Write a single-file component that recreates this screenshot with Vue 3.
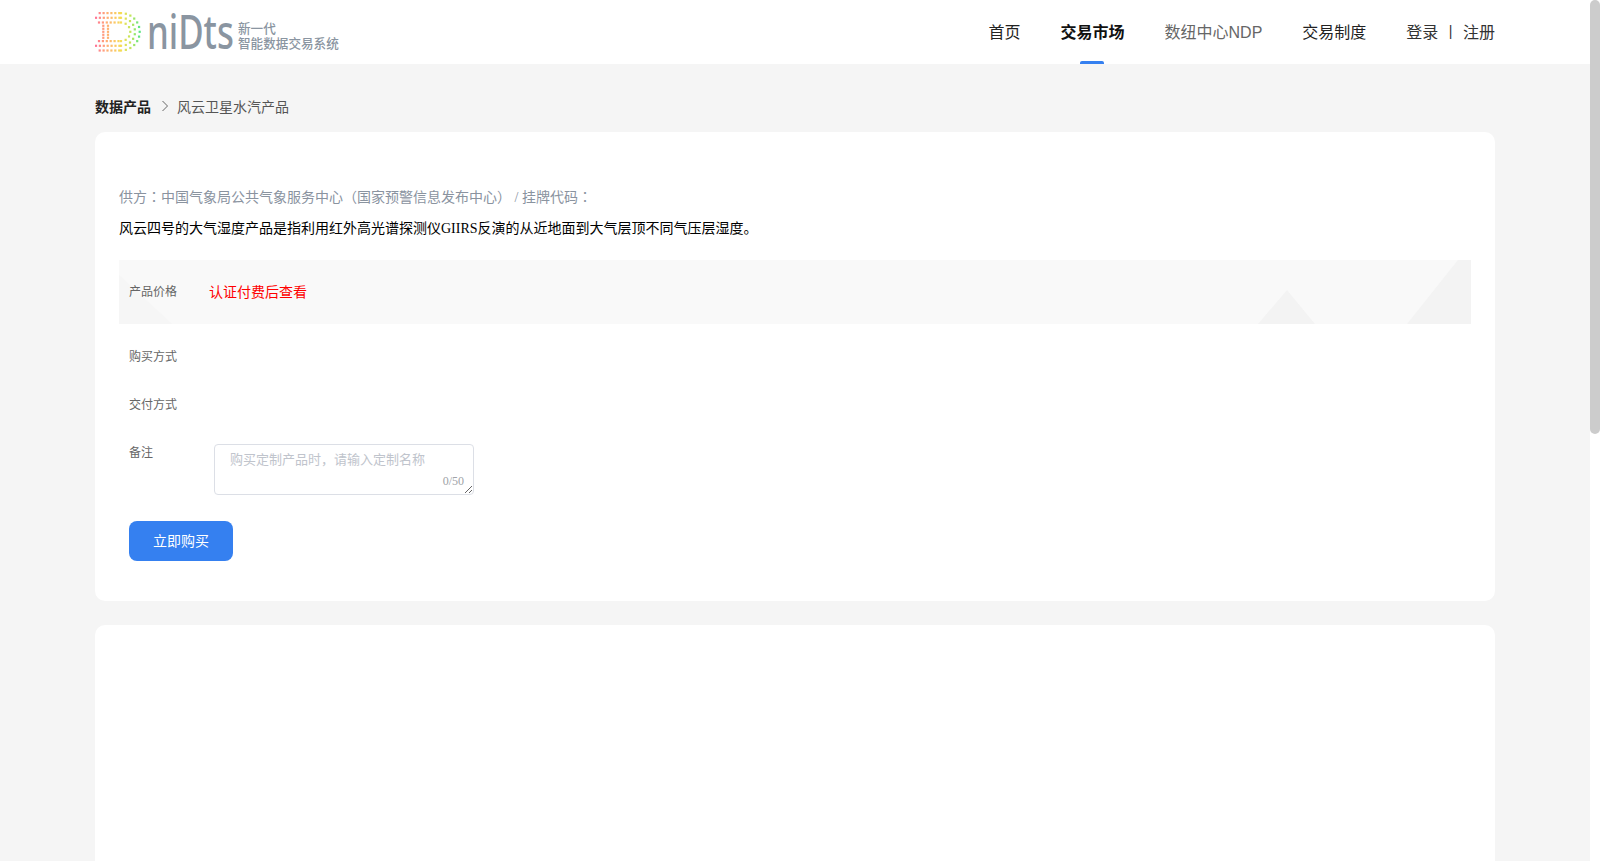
<template>
  <div class="page">
    <header class="top-bar">
      <div class="top-inner">
        <div class="logo">
          <svg class="logo-mark" width="46" height="42" viewBox="0 0 46 42">
            <rect
              v-for="(d, i) in logoDots"
              :key="i"
              :x="d.x - 1.1"
              :y="d.y - 1.1"
              width="2.2"
              height="2.2"
              :fill="d.color"
              opacity="0.85"
            />
          </svg>
          <span class="logo-word"><span>niDts</span></span>
          <span class="logo-tag">
            <span>新一代</span>
            <span>智能数据交易系统</span>
          </span>
        </div>
        <nav class="nav">
          <a v-for="item in navItems" :key="item.label" class="nav-item" :class="item.cls">{{ item.label }}</a>
          <span class="auth">
            <a>登录</a>
            <i>|</i>
            <a>注册</a>
          </span>
        </nav>
      </div>
    </header>

    <main class="main">
      <div class="crumb">
        <strong>数据产品</strong>
        <svg class="crumb-arrow" width="8" height="12" viewBox="0 0 8 12">
          <path d="M1.5 1l5 5-5 5" fill="none" stroke="#666" stroke-width="1" />
        </svg>
        <span>风云卫星水汽产品</span>
      </div>

      <section class="card info">
        <p class="supplier">供方<span class="mid">：</span>中国气象局公共气象服务中心（国家预警信息发布中心） / 挂牌代码<span class="mid">：</span></p>
        <p class="desc">风云四号的大气湿度产品是指利用红外高光谱探测仪GIIRS反演的从近地面到大气层顶不同气压层湿度。</p>

        <div class="price-band">
          <svg class="band-bg" width="1352" height="64" viewBox="0 0 1352 64">
            <polygon points="0,15 53,64 0,64" fill="#f6f6f6" />
            <polygon points="1168,30 1139,64 1196,64" fill="#f3f3f3" />
            <polygon points="1339,0 1352,0 1352,64 1288,64" fill="#f3f3f3" />
          </svg>
          <span class="label">产品价格</span>
          <span class="price">认证付费后查看</span>
        </div>

        <div class="rows">
          <div class="row"><span class="label">购买方式</span></div>
          <div class="row"><span class="label">交付方式</span></div>
        </div>

        <div class="remark">
          <span class="label">备注</span>
          <div class="remark-box">
            <textarea placeholder="购买定制产品时，请输入定制名称" maxlength="50"></textarea>
            <span class="count">0/50</span>
          </div>
        </div>

        <button class="buy-btn">立即购买</button>
      </section>

      <section class="card detail"></section>
    </main>

    <!-- 自定义滚动条 -->
    <div class="scroll-track"><div class="scroll-thumb"></div></div>
  </div>
</template>

<script setup>
const navItems = [
  { label: '首页', cls: '' },
  { label: '交易市场', cls: 'active' },
  { label: '数纽中心NDP', cls: 'muted' },
  { label: '交易制度', cls: '' },
]

// logo 的彩色点阵，从左到右 粉 -> 橙 -> 黄 -> 绿
const dotColor = (x) => {
  const stops = [
    [0, [255, 88, 135]],
    [12, [255, 160, 90]],
    [26, [245, 215, 60]],
    [36, [180, 225, 60]],
    [45, [60, 225, 110]],
  ]
  for (let i = 1; i < stops.length; i++) {
    if (x <= stops[i][0]) {
      const [x0, c0] = stops[i - 1]
      const [x1, c1] = stops[i]
      const t = (x - x0) / (x1 - x0)
      const c = c0.map((v, j) => Math.round(v + (c1[j] - v) * t))
      return `rgb(${c.join(',')})`
    }
  }
  return 'rgb(60,225,110)'
}

const buildDots = () => {
  const dots = []
  const cy = 20.8
  const cx = 26
  const add = (x, y) => dots.push({ x, y, color: dotColor(x) })
  const rings = [
    { r: 18.7, x0: 4.7, arc: 12 },
    { r: 14, x0: 1, arc: 9 },
    { r: 9.3, x0: 4, arc: 6 },
  ]
  rings.forEach(({ r, x0, arc }) => {
    for (let x = x0; x < cx; x += 3.9) {
      add(x, cy - r)
      add(x, cy + r)
    }
    for (let i = 0; i <= arc; i++) {
      const a = -Math.PI / 2 + (Math.PI * i) / arc
      add(cx + r * Math.cos(a), cy + r * Math.sin(a))
    }
  })
  // 竖笔
  for (let y = cy - 6; y <= cy + 6; y += 3) {
    add(8.3, y)
    add(13, y)
  }
  return dots
}

const logoDots = buildDots()
</script>

<style scoped>
.page {
  width: 1590px;
  min-height: 100vh;
  background: #f5f5f5;
  font-family: "Liberation Serif", "Noto Sans CJK SC", serif;
}

.scroll-track {
  position: fixed;
  top: 0;
  right: 0;
  bottom: 0;
  width: 10px;
  background: #fff;
}

.scroll-thumb {
  height: 434px;
  border-radius: 5px;
  background: #ccc;
}

.top-bar {
  height: 64px;
  background: #fff;
}

.top-inner {
  width: 1400px;
  height: 100%;
  margin: 0 auto;
  display: flex;
  align-items: center;
  justify-content: space-between;
}

.logo {
  display: flex;
  align-items: center;
}

.logo-mark {
  display: block;
}

.logo-word {
  display: block;
  width: 86px;
  margin: -2px 0 0 6px;
  font-family: "Noto Sans", sans-serif;
  font-size: 47px;
  line-height: 40px;
  font-weight: 500;
  color: #8a95a1;
  white-space: nowrap;
}

.logo-word span {
  display: inline-block;
  transform: scaleX(0.74);
  transform-origin: left center;
}

.logo-tag {
  display: flex;
  flex-direction: column;
  margin: 6px 0 0 5px;
  font-family: "Noto Sans CJK SC", sans-serif;
  font-size: 12.6px;
  line-height: 15px;
  font-weight: 500;
  color: #8a95a1;
}

.nav {
  display: flex;
  align-items: center;
  height: 100%;
  gap: 40px;
  font-family: "Liberation Sans", "Noto Sans CJK SC", sans-serif;
  font-size: 16px;
  color: #222;
}

.nav-item {
  position: relative;
  display: flex;
  align-items: center;
  height: 100%;
  padding-bottom: 3px;
  box-sizing: border-box;
}

.nav-item.active {
  font-weight: 700;
  color: #111;
}

.nav-item.active::after {
  content: "";
  position: absolute;
  left: 50%;
  bottom: 0;
  width: 24px;
  height: 3px;
  margin-left: -13px;
  border-radius: 2px 2px 0 0;
  background: #3580f0;
}

.nav-item.muted {
  color: #666;
}

.auth {
  display: flex;
  align-items: center;
  gap: 10.5px;
  padding-bottom: 3px;
  color: #333;
}

.auth i {
  font-style: normal;
  font-size: 14px;
}

.main {
  width: 1400px;
  margin: 0 auto;
  padding: 31px 0 24px;
}

.crumb {
  display: flex;
  align-items: center;
  height: 22px;
  margin-bottom: 15px;
  font-size: 14px;
  color: #555;
}

.crumb strong {
  color: #222;
}

.crumb-arrow {
  margin: 0 8px 0 10px;
}

.card {
  background: #fff;
  border-radius: 10px;
}

.info {
  padding: 55px 24px 40px;
}

.detail {
  height: 1060px;
  margin-top: 24px;
}

.supplier,
.desc {
  margin: 0;
  font-size: 14px;
  line-height: 22px;
}

.supplier {
  color: #8a939f;
}

.mid {
  font-family: "Noto Sans CJK TC", sans-serif;
  line-height: 1;
}

.desc {
  margin-top: 9px;
  color: #000;
}

.price-band {
  position: relative;
  display: flex;
  align-items: center;
  height: 64px;
  margin-top: 20px;
  padding-left: 10px;
  background: #f9f9f9;
}

.band-bg {
  position: absolute;
  left: 0;
  top: 0;
}

.label {
  position: relative;
  flex: 0 0 80px;
  width: 80px;
  font-size: 12px;
  line-height: 18px;
  color: #666;
}

.price {
  position: relative;
  top: -1px;
  font-size: 14px;
  color: #f00;
}

.rows {
  margin-top: 8px;
}

.row {
  display: flex;
  align-items: center;
  height: 48px;
  box-sizing: border-box;
  padding: 2px 0 0 10px;
}

.remark {
  display: flex;
  align-items: flex-start;
  margin-top: 16px;
  padding-left: 10px;
}

.remark-box {
  position: relative;
  width: 260px;
  height: 51px;
  margin-left: 5px;
}

.remark-box textarea {
  display: block;
  width: 100%;
  height: 100%;
  box-sizing: border-box;
  padding: 4px 15px;
  border: 1px solid #dcdfe6;
  border-radius: 4px;
  outline: none;
  font-family: "Liberation Serif", "Noto Sans CJK SC", serif;
  font-size: 13px;
  line-height: 22px;
  color: #333;
}

.remark-box textarea::placeholder {
  color: #c0c4cc;
}

.count {
  position: absolute;
  right: 10px;
  bottom: 7px;
  font-size: 12px;
  line-height: 14px;
  color: #a0a3a8;
}

.buy-btn {
  display: block;
  width: 104px;
  height: 40px;
  margin: 26px 0 0 10px;
  padding: 0 0 3px;
  border: 0;
  border-radius: 8px;
  background: #3580f0;
  color: #fff;
  font-family: "Liberation Sans", "Noto Sans CJK SC", sans-serif;
  font-size: 14px;
  cursor: pointer;
}
</style>
